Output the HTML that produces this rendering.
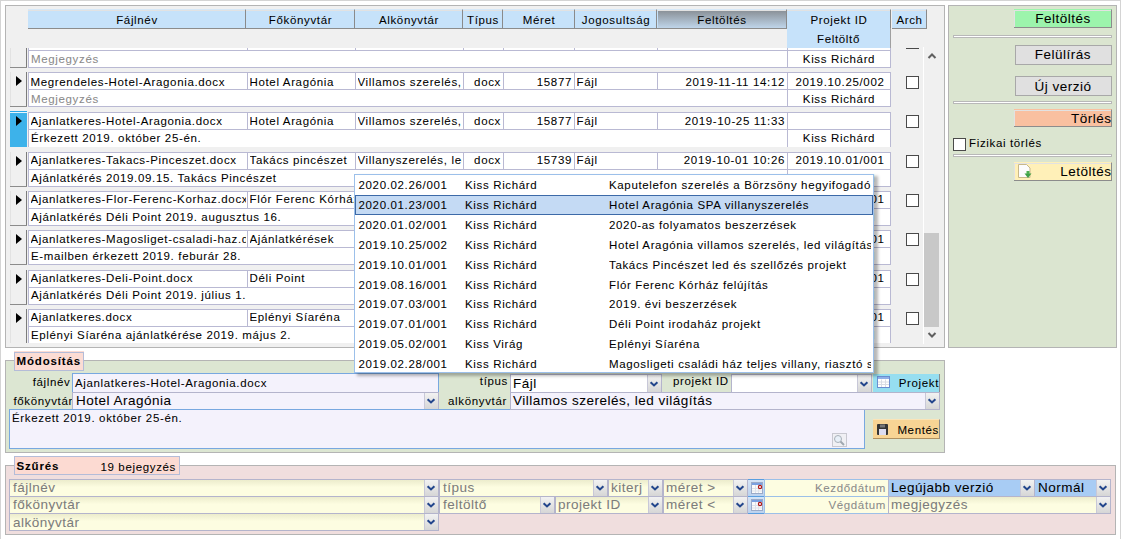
<!DOCTYPE html>
<html><head><meta charset="utf-8"><style>
html,body{margin:0;padding:0;width:1121px;height:539px;overflow:hidden;background:#fff}
body{position:relative;font-family:"Liberation Sans",sans-serif;color:#000}
body div, body svg{position:absolute}
body div div{white-space:nowrap;-webkit-text-stroke:0.05px currentColor}
div{white-space:nowrap;-webkit-text-stroke:0.05px currentColor}
</style></head><body>
<div style="left:0px;top:0px;width:1121px;height:539px;border:1px solid #d4d4d4;border-bottom:0;box-sizing:border-box;background:#fff"></div>
<div style="left:5px;top:5px;width:940px;height:343px;border:1px solid #b4b4b4;box-sizing:border-box;background:#f0f0f0"></div>
<div style="left:28px;top:9px;width:218px;height:20px;background:#c6e2fa;border-top:1px solid #d6e8f8;border-right:1px solid #8a8a8a;border-bottom:1px solid #8c8c8c;box-shadow:inset 0 1px 0 #e2e2e2;box-sizing:border-box"></div>
<div style="left:-163.0px;width:600px;text-align:center;top:13.59px;line-height:12.85px;font-size:11.5px;letter-spacing:0.65px;color:#000;">Fájlnév</div>
<div style="left:246px;top:9px;width:109px;height:20px;background:#c6e2fa;border-top:1px solid #d6e8f8;border-right:1px solid #8a8a8a;border-bottom:1px solid #8c8c8c;box-shadow:inset 0 1px 0 #e2e2e2;box-sizing:border-box"></div>
<div style="left:0.5px;width:600px;text-align:center;top:13.59px;line-height:12.85px;font-size:11.5px;letter-spacing:0.65px;color:#000;">Főkönyvtár</div>
<div style="left:355px;top:9px;width:108px;height:20px;background:#c6e2fa;border-top:1px solid #d6e8f8;border-right:1px solid #8a8a8a;border-bottom:1px solid #8c8c8c;box-shadow:inset 0 1px 0 #e2e2e2;box-sizing:border-box"></div>
<div style="left:109.0px;width:600px;text-align:center;top:13.59px;line-height:12.85px;font-size:11.5px;letter-spacing:0.65px;color:#000;">Alkönyvtár</div>
<div style="left:463px;top:9px;width:40px;height:20px;background:#c6e2fa;border-top:1px solid #d6e8f8;border-right:1px solid #8a8a8a;border-bottom:1px solid #8c8c8c;box-shadow:inset 0 1px 0 #e2e2e2;box-sizing:border-box"></div>
<div style="left:183.0px;width:600px;text-align:center;top:13.59px;line-height:12.85px;font-size:11.5px;letter-spacing:0.65px;color:#000;">Típus</div>
<div style="left:503px;top:9px;width:72px;height:20px;background:#c6e2fa;border-top:1px solid #d6e8f8;border-right:1px solid #8a8a8a;border-bottom:1px solid #8c8c8c;box-shadow:inset 0 1px 0 #e2e2e2;box-sizing:border-box"></div>
<div style="left:239.0px;width:600px;text-align:center;top:13.59px;line-height:12.85px;font-size:11.5px;letter-spacing:0.65px;color:#000;">Méret</div>
<div style="left:575px;top:9px;width:82px;height:20px;background:#c6e2fa;border-top:1px solid #d6e8f8;border-right:1px solid #8a8a8a;border-bottom:1px solid #8c8c8c;box-shadow:inset 0 1px 0 #e2e2e2;box-sizing:border-box"></div>
<div style="left:316.0px;width:600px;text-align:center;top:13.59px;line-height:12.85px;font-size:11.5px;letter-spacing:0.65px;color:#000;">Jogosultság</div>
<div style="left:657px;top:9px;width:130px;height:20px;background:#c6e2fa;border-top:1px solid #d6e8f8;border-right:1px solid #8a8a8a;border-bottom:1px solid #8c8c8c;box-shadow:inset 0 1px 0 #e2e2e2;box-sizing:border-box"></div>
<div style="left:658px;top:11px;width:128px;height:17px;background:linear-gradient(#8b9299,#bfd5ea)"></div>
<div style="left:422.0px;width:600px;text-align:center;top:13.59px;line-height:12.85px;font-size:11.5px;letter-spacing:0.65px;color:#000;">Feltöltés</div>
<div style="left:787px;top:9px;width:104px;height:20px;background:#c6e2fa;border-top:1px solid #d6e8f8;border-right:1px solid #8a8a8a;border-bottom:1px solid #8c8c8c;box-shadow:inset 0 1px 0 #e2e2e2;box-sizing:border-box"></div>
<div style="left:539.0px;width:600px;text-align:center;top:13.59px;line-height:12.85px;font-size:11.5px;letter-spacing:0.65px;color:#000;">Projekt ID</div>
<div style="left:892px;top:9px;width:35px;height:20px;background:#c6e2fa;border-top:1px solid #d6e8f8;border-right:1px solid #8a8a8a;border-bottom:1px solid #8c8c8c;box-shadow:inset 0 1px 0 #e2e2e2;box-sizing:border-box"></div>
<div style="left:609.5px;width:600px;text-align:center;top:13.59px;line-height:12.85px;font-size:11.5px;letter-spacing:0.65px;color:#000;">Arch</div>
<div style="left:787px;top:28px;width:104px;height:21px;background:#c6e2fa;border-right:1px solid #a0a0a0;border-bottom:1px solid #8c8c8c;box-sizing:border-box"></div>
<div style="left:538.5px;width:600px;text-align:center;top:32.59px;line-height:12.85px;font-size:11.5px;letter-spacing:0.65px;color:#000;">Feltöltő</div>
<div style="left:6px;top:48px;width:917px;height:295px;overflow:hidden">
<div style="left:4px;top:-15px;width:1px;height:34px;background:#e2e2e2"></div>
<div style="left:20px;top:-15px;width:1px;height:35px;background:#7c7c7c"></div>
<div style="left:4px;top:19px;width:17px;height:1px;background:#8c8c8c"></div>
<div style="left:22px;top:-15px;width:220px;height:18px;background:#fff;border:1px solid #b9b9d3;box-sizing:border-box"></div>
<div style="left:241px;top:-15px;width:109px;height:18px;background:#fff;border:1px solid #b9b9d3;box-sizing:border-box"></div>
<div style="left:349px;top:-15px;width:109px;height:18px;background:#fff;border:1px solid #b9b9d3;box-sizing:border-box"></div>
<div style="left:457px;top:-15px;width:41px;height:18px;background:#fff;border:1px solid #b9b9d3;box-sizing:border-box"></div>
<div style="left:497px;top:-15px;width:72px;height:18px;background:#fff;border:1px solid #b9b9d3;box-sizing:border-box"></div>
<div style="left:568px;top:-15px;width:84px;height:18px;background:#fff;border:1px solid #b9b9d3;box-sizing:border-box"></div>
<div style="left:651px;top:-15px;width:131px;height:18px;background:#fff;border:1px solid #b9b9d3;box-sizing:border-box"></div>
<div style="left:781px;top:-15px;width:104px;height:18px;background:#fff;border:1px solid #b9b9d3;box-sizing:border-box"></div>
<div style="left:22px;top:2px;width:760px;height:18px;background:#fff;border:1px solid #b9b9d3;box-sizing:border-box"></div>
<div style="left:781px;top:2px;width:104px;height:18px;background:#fff;border:1px solid #b9b9d3;box-sizing:border-box"></div>
<div style="left:25px;top:4.59px;line-height:12.85px;font-size:11.5px;letter-spacing:0.65px;color:#8a8a8a;white-space:nowrap">Megjegyzés</div>
<div style="left:781px;width:104px;text-align:center;top:4.59px;line-height:12.85px;font-size:11.5px;letter-spacing:0.65px;white-space:nowrap">Kiss Richárd</div>
<div style="left:900px;top:-12px;width:13px;height:13px;background:#fff;border:1px solid #4a4a4a;box-sizing:border-box"></div>
<div style="left:4px;top:24px;width:1px;height:34px;background:#e2e2e2"></div>
<div style="left:20px;top:24px;width:1px;height:35px;background:#7c7c7c"></div>
<div style="left:4px;top:58px;width:17px;height:1px;background:#8c8c8c"></div>
<svg style="left:10px;top:28px" width="7" height="11"><path d="M0 0 L0 10 L6 5 Z" fill="#000"/></svg>
<div style="left:22px;top:24px;width:220px;height:18px;background:#fff;border:1px solid #b9b9d3;box-sizing:border-box"></div>
<div style="left:24.5px;top:27.59px;width:215.5px;overflow:hidden;white-space:nowrap;line-height:12.85px;font-size:11.5px;letter-spacing:0.65px">Megrendeles-Hotel-Aragonia.docx</div>
<div style="left:241px;top:24px;width:109px;height:18px;background:#fff;border:1px solid #b9b9d3;box-sizing:border-box"></div>
<div style="left:243.5px;top:27.59px;width:104.5px;overflow:hidden;white-space:nowrap;line-height:12.85px;font-size:11.5px;letter-spacing:0.65px">Hotel Aragónia</div>
<div style="left:349px;top:24px;width:109px;height:18px;background:#fff;border:1px solid #b9b9d3;box-sizing:border-box"></div>
<div style="left:351.5px;top:27.59px;width:104.5px;overflow:hidden;white-space:nowrap;line-height:12.85px;font-size:11.5px;letter-spacing:0.65px">Villamos szerelés, led</div>
<div style="left:457px;top:24px;width:41px;height:18px;background:#fff;border:1px solid #b9b9d3;box-sizing:border-box"></div>
<div style="left:458px;top:27.59px;width:37px;text-align:right;overflow:hidden;white-space:nowrap;line-height:12.85px;font-size:11.5px;letter-spacing:0.65px">docx</div>
<div style="left:497px;top:24px;width:72px;height:18px;background:#fff;border:1px solid #b9b9d3;box-sizing:border-box"></div>
<div style="left:498px;top:27.59px;width:68px;text-align:right;overflow:hidden;white-space:nowrap;line-height:12.85px;font-size:11.5px;letter-spacing:0.65px">15877</div>
<div style="left:568px;top:24px;width:84px;height:18px;background:#fff;border:1px solid #b9b9d3;box-sizing:border-box"></div>
<div style="left:570.5px;top:27.59px;width:79.5px;overflow:hidden;white-space:nowrap;line-height:12.85px;font-size:11.5px;letter-spacing:0.65px">Fájl</div>
<div style="left:651px;top:24px;width:131px;height:18px;background:#fff;border:1px solid #b9b9d3;box-sizing:border-box"></div>
<div style="left:652px;top:27.59px;width:127px;text-align:right;overflow:hidden;white-space:nowrap;line-height:12.85px;font-size:11.5px;letter-spacing:0.65px">2019-11-11 14:12</div>
<div style="left:781px;top:24px;width:104px;height:18px;background:#fff;border:1px solid #b9b9d3;box-sizing:border-box"></div>
<div style="left:783px;top:27.59px;width:102px;text-align:center;overflow:hidden;white-space:nowrap;line-height:12.85px;font-size:11.5px;letter-spacing:0.65px">2019.10.25/002</div>
<div style="left:22px;top:41px;width:760px;height:18px;background:#fff;border:1px solid #b9b9d3;box-sizing:border-box"></div>
<div style="left:781px;top:41px;width:104px;height:18px;background:#fff;border:1px solid #b9b9d3;box-sizing:border-box"></div>
<div style="left:25px;top:44.99px;line-height:12.85px;font-size:11.5px;letter-spacing:0.65px;color:#8a8a8a;white-space:nowrap">Megjegyzés</div>
<div style="left:781px;width:104px;text-align:center;top:44.99px;line-height:12.85px;font-size:11.5px;letter-spacing:0.65px;white-space:nowrap">Kiss Richárd</div>
<div style="left:900px;top:28px;width:13px;height:13px;background:#fff;border:1px solid #4a4a4a;box-sizing:border-box"></div>
<div style="left:4px;top:63px;width:17px;height:36px;background:#3db2ea;border-top:1px solid #2aa8e8;box-sizing:border-box"></div>
<div style="left:4px;top:64px;width:17px;height:1px;background:#e8f6fd"></div>
<svg style="left:10px;top:68px" width="7" height="11"><path d="M0 0 L0 10 L6 5 Z" fill="#000"/></svg>
<div style="left:22px;top:64px;width:220px;height:18px;background:#fff;border:1px solid #b9b9d3;box-sizing:border-box"></div>
<div style="left:24.5px;top:66.87px;width:215.5px;overflow:hidden;white-space:nowrap;line-height:12.85px;font-size:11.5px;letter-spacing:0.65px">Ajanlatkeres-Hotel-Aragonia.docx</div>
<div style="left:241px;top:64px;width:109px;height:18px;background:#fff;border:1px solid #b9b9d3;box-sizing:border-box"></div>
<div style="left:243.5px;top:66.87px;width:104.5px;overflow:hidden;white-space:nowrap;line-height:12.85px;font-size:11.5px;letter-spacing:0.65px">Hotel Aragónia</div>
<div style="left:349px;top:64px;width:109px;height:18px;background:#fff;border:1px solid #b9b9d3;box-sizing:border-box"></div>
<div style="left:351.5px;top:66.87px;width:104.5px;overflow:hidden;white-space:nowrap;line-height:12.85px;font-size:11.5px;letter-spacing:0.65px">Villamos szerelés, led</div>
<div style="left:457px;top:64px;width:41px;height:18px;background:#fff;border:1px solid #b9b9d3;box-sizing:border-box"></div>
<div style="left:458px;top:66.87px;width:37px;text-align:right;overflow:hidden;white-space:nowrap;line-height:12.85px;font-size:11.5px;letter-spacing:0.65px">docx</div>
<div style="left:497px;top:64px;width:72px;height:18px;background:#fff;border:1px solid #b9b9d3;box-sizing:border-box"></div>
<div style="left:498px;top:66.87px;width:68px;text-align:right;overflow:hidden;white-space:nowrap;line-height:12.85px;font-size:11.5px;letter-spacing:0.65px">15877</div>
<div style="left:568px;top:64px;width:84px;height:18px;background:#fff;border:1px solid #b9b9d3;box-sizing:border-box"></div>
<div style="left:570.5px;top:66.87px;width:79.5px;overflow:hidden;white-space:nowrap;line-height:12.85px;font-size:11.5px;letter-spacing:0.65px">Fájl</div>
<div style="left:651px;top:64px;width:131px;height:18px;background:#fff;border:1px solid #b9b9d3;box-sizing:border-box"></div>
<div style="left:652px;top:66.87px;width:127px;text-align:right;overflow:hidden;white-space:nowrap;line-height:12.85px;font-size:11.5px;letter-spacing:0.65px">2019-10-25 11:33</div>
<div style="left:781px;top:64px;width:104px;height:18px;background:#fff;border:1px solid #b9b9d3;box-sizing:border-box"></div>
<div style="left:22px;top:81px;width:760px;height:18px;background:#fff;border:1px solid #b9b9d3;border-bottom:0;box-sizing:border-box"></div>
<div style="left:781px;top:81px;width:104px;height:18px;background:#fff;border:1px solid #b9b9d3;border-bottom:0;box-sizing:border-box"></div>
<div style="left:25px;top:84.27px;line-height:12.85px;font-size:11.5px;letter-spacing:0.65px;white-space:nowrap">Érkezett 2019. október 25-én.</div>
<div style="left:781px;width:104px;text-align:center;top:84.27px;line-height:12.85px;font-size:11.5px;letter-spacing:0.65px;white-space:nowrap">Kiss Richárd</div>
<div style="left:900px;top:67px;width:13px;height:13px;background:#fff;border:1px solid #4a4a4a;box-sizing:border-box"></div>
<div style="left:4px;top:104px;width:1px;height:34px;background:#e2e2e2"></div>
<div style="left:20px;top:104px;width:1px;height:35px;background:#7c7c7c"></div>
<div style="left:4px;top:138px;width:17px;height:1px;background:#8c8c8c"></div>
<svg style="left:10px;top:108px" width="7" height="11"><path d="M0 0 L0 10 L6 5 Z" fill="#000"/></svg>
<div style="left:22px;top:104px;width:220px;height:18px;background:#fff;border:1px solid #b9b9d3;box-sizing:border-box"></div>
<div style="left:24.5px;top:106.15px;width:215.5px;overflow:hidden;white-space:nowrap;line-height:12.85px;font-size:11.5px;letter-spacing:0.65px">Ajanlatkeres-Takacs-Pinceszet.docx</div>
<div style="left:241px;top:104px;width:109px;height:18px;background:#fff;border:1px solid #b9b9d3;box-sizing:border-box"></div>
<div style="left:243.5px;top:106.15px;width:104.5px;overflow:hidden;white-space:nowrap;line-height:12.85px;font-size:11.5px;letter-spacing:0.65px">Takács pincészet</div>
<div style="left:349px;top:104px;width:109px;height:18px;background:#fff;border:1px solid #b9b9d3;box-sizing:border-box"></div>
<div style="left:351.5px;top:106.15px;width:104.5px;overflow:hidden;white-space:nowrap;line-height:12.85px;font-size:11.5px;letter-spacing:0.65px">Villanyszerelés, led</div>
<div style="left:457px;top:104px;width:41px;height:18px;background:#fff;border:1px solid #b9b9d3;box-sizing:border-box"></div>
<div style="left:458px;top:106.15px;width:37px;text-align:right;overflow:hidden;white-space:nowrap;line-height:12.85px;font-size:11.5px;letter-spacing:0.65px">docx</div>
<div style="left:497px;top:104px;width:72px;height:18px;background:#fff;border:1px solid #b9b9d3;box-sizing:border-box"></div>
<div style="left:498px;top:106.15px;width:68px;text-align:right;overflow:hidden;white-space:nowrap;line-height:12.85px;font-size:11.5px;letter-spacing:0.65px">15739</div>
<div style="left:568px;top:104px;width:84px;height:18px;background:#fff;border:1px solid #b9b9d3;box-sizing:border-box"></div>
<div style="left:570.5px;top:106.15px;width:79.5px;overflow:hidden;white-space:nowrap;line-height:12.85px;font-size:11.5px;letter-spacing:0.65px">Fájl</div>
<div style="left:651px;top:104px;width:131px;height:18px;background:#fff;border:1px solid #b9b9d3;box-sizing:border-box"></div>
<div style="left:652px;top:106.15px;width:127px;text-align:right;overflow:hidden;white-space:nowrap;line-height:12.85px;font-size:11.5px;letter-spacing:0.65px">2019-10-01 10:26</div>
<div style="left:781px;top:104px;width:104px;height:18px;background:#fff;border:1px solid #b9b9d3;box-sizing:border-box"></div>
<div style="left:783px;top:106.15px;width:102px;text-align:center;overflow:hidden;white-space:nowrap;line-height:12.85px;font-size:11.5px;letter-spacing:0.65px">2019.10.01/001</div>
<div style="left:22px;top:121px;width:760px;height:18px;background:#fff;border:1px solid #b9b9d3;box-sizing:border-box"></div>
<div style="left:781px;top:121px;width:104px;height:18px;background:#fff;border:1px solid #b9b9d3;box-sizing:border-box"></div>
<div style="left:25px;top:123.55px;line-height:12.85px;font-size:11.5px;letter-spacing:0.65px;white-space:nowrap">Ajánlatkérés 2019.09.15. Takács Pincészet</div>
<div style="left:781px;width:104px;text-align:center;top:123.55px;line-height:12.85px;font-size:11.5px;letter-spacing:0.65px;white-space:nowrap">Kiss Richárd</div>
<div style="left:900px;top:107px;width:13px;height:13px;background:#fff;border:1px solid #4a4a4a;box-sizing:border-box"></div>
<div style="left:4px;top:143px;width:1px;height:34px;background:#e2e2e2"></div>
<div style="left:20px;top:143px;width:1px;height:35px;background:#7c7c7c"></div>
<div style="left:4px;top:177px;width:17px;height:1px;background:#8c8c8c"></div>
<svg style="left:10px;top:147px" width="7" height="11"><path d="M0 0 L0 10 L6 5 Z" fill="#000"/></svg>
<div style="left:22px;top:143px;width:220px;height:18px;background:#fff;border:1px solid #b9b9d3;box-sizing:border-box"></div>
<div style="left:24.5px;top:145.43px;width:215.5px;overflow:hidden;white-space:nowrap;line-height:12.85px;font-size:11.5px;letter-spacing:0.65px">Ajanlatkeres-Flor-Ferenc-Korhaz.docx</div>
<div style="left:241px;top:143px;width:109px;height:18px;background:#fff;border:1px solid #b9b9d3;box-sizing:border-box"></div>
<div style="left:243.5px;top:145.43px;width:104.5px;overflow:hidden;white-space:nowrap;line-height:12.85px;font-size:11.5px;letter-spacing:0.65px">Flór Ferenc Kórház</div>
<div style="left:349px;top:143px;width:109px;height:18px;background:#fff;border:1px solid #b9b9d3;box-sizing:border-box"></div>
<div style="left:351.5px;top:145.43px;width:104.5px;overflow:hidden;white-space:nowrap;line-height:12.85px;font-size:11.5px;letter-spacing:0.65px">Villanyszerelés</div>
<div style="left:457px;top:143px;width:41px;height:18px;background:#fff;border:1px solid #b9b9d3;box-sizing:border-box"></div>
<div style="left:458px;top:145.43px;width:37px;text-align:right;overflow:hidden;white-space:nowrap;line-height:12.85px;font-size:11.5px;letter-spacing:0.65px">docx</div>
<div style="left:497px;top:143px;width:72px;height:18px;background:#fff;border:1px solid #b9b9d3;box-sizing:border-box"></div>
<div style="left:498px;top:145.43px;width:68px;text-align:right;overflow:hidden;white-space:nowrap;line-height:12.85px;font-size:11.5px;letter-spacing:0.65px">15739</div>
<div style="left:568px;top:143px;width:84px;height:18px;background:#fff;border:1px solid #b9b9d3;box-sizing:border-box"></div>
<div style="left:570.5px;top:145.43px;width:79.5px;overflow:hidden;white-space:nowrap;line-height:12.85px;font-size:11.5px;letter-spacing:0.65px">Fájl</div>
<div style="left:651px;top:143px;width:131px;height:18px;background:#fff;border:1px solid #b9b9d3;box-sizing:border-box"></div>
<div style="left:652px;top:145.43px;width:127px;text-align:right;overflow:hidden;white-space:nowrap;line-height:12.85px;font-size:11.5px;letter-spacing:0.65px">2019-10-01 10:26</div>
<div style="left:781px;top:143px;width:104px;height:18px;background:#fff;border:1px solid #b9b9d3;box-sizing:border-box"></div>
<div style="left:783px;top:145.43px;width:102px;text-align:center;overflow:hidden;white-space:nowrap;line-height:12.85px;font-size:11.5px;letter-spacing:0.65px">2019.08.16/001</div>
<div style="left:22px;top:160px;width:760px;height:18px;background:#fff;border:1px solid #b9b9d3;box-sizing:border-box"></div>
<div style="left:781px;top:160px;width:104px;height:18px;background:#fff;border:1px solid #b9b9d3;box-sizing:border-box"></div>
<div style="left:25px;top:162.83px;line-height:12.85px;font-size:11.5px;letter-spacing:0.65px;white-space:nowrap">Ajánlatkérés Déli Point 2019. augusztus 16.</div>
<div style="left:781px;width:104px;text-align:center;top:162.83px;line-height:12.85px;font-size:11.5px;letter-spacing:0.65px;white-space:nowrap">Kiss Richárd</div>
<div style="left:900px;top:146px;width:13px;height:13px;background:#fff;border:1px solid #4a4a4a;box-sizing:border-box"></div>
<div style="left:4px;top:182px;width:1px;height:34px;background:#e2e2e2"></div>
<div style="left:20px;top:182px;width:1px;height:35px;background:#7c7c7c"></div>
<div style="left:4px;top:216px;width:17px;height:1px;background:#8c8c8c"></div>
<svg style="left:10px;top:186px" width="7" height="11"><path d="M0 0 L0 10 L6 5 Z" fill="#000"/></svg>
<div style="left:22px;top:182px;width:220px;height:18px;background:#fff;border:1px solid #b9b9d3;box-sizing:border-box"></div>
<div style="left:24.5px;top:184.71px;width:215.5px;overflow:hidden;white-space:nowrap;line-height:12.85px;font-size:11.5px;letter-spacing:0.65px">Ajanlatkeres-Magosliget-csaladi-haz.docx</div>
<div style="left:241px;top:182px;width:109px;height:18px;background:#fff;border:1px solid #b9b9d3;box-sizing:border-box"></div>
<div style="left:243.5px;top:184.71px;width:104.5px;overflow:hidden;white-space:nowrap;line-height:12.85px;font-size:11.5px;letter-spacing:0.65px">Ajánlatkérések</div>
<div style="left:349px;top:182px;width:109px;height:18px;background:#fff;border:1px solid #b9b9d3;box-sizing:border-box"></div>
<div style="left:351.5px;top:184.71px;width:104.5px;overflow:hidden;white-space:nowrap;line-height:12.85px;font-size:11.5px;letter-spacing:0.65px">Villanyszerelés</div>
<div style="left:457px;top:182px;width:41px;height:18px;background:#fff;border:1px solid #b9b9d3;box-sizing:border-box"></div>
<div style="left:458px;top:184.71px;width:37px;text-align:right;overflow:hidden;white-space:nowrap;line-height:12.85px;font-size:11.5px;letter-spacing:0.65px">docx</div>
<div style="left:497px;top:182px;width:72px;height:18px;background:#fff;border:1px solid #b9b9d3;box-sizing:border-box"></div>
<div style="left:498px;top:184.71px;width:68px;text-align:right;overflow:hidden;white-space:nowrap;line-height:12.85px;font-size:11.5px;letter-spacing:0.65px">15739</div>
<div style="left:568px;top:182px;width:84px;height:18px;background:#fff;border:1px solid #b9b9d3;box-sizing:border-box"></div>
<div style="left:570.5px;top:184.71px;width:79.5px;overflow:hidden;white-space:nowrap;line-height:12.85px;font-size:11.5px;letter-spacing:0.65px">Fájl</div>
<div style="left:651px;top:182px;width:131px;height:18px;background:#fff;border:1px solid #b9b9d3;box-sizing:border-box"></div>
<div style="left:652px;top:184.71px;width:127px;text-align:right;overflow:hidden;white-space:nowrap;line-height:12.85px;font-size:11.5px;letter-spacing:0.65px">2019-10-01 10:26</div>
<div style="left:781px;top:182px;width:104px;height:18px;background:#fff;border:1px solid #b9b9d3;box-sizing:border-box"></div>
<div style="left:783px;top:184.71px;width:102px;text-align:center;overflow:hidden;white-space:nowrap;line-height:12.85px;font-size:11.5px;letter-spacing:0.65px">2019.02.28/001</div>
<div style="left:22px;top:199px;width:760px;height:18px;background:#fff;border:1px solid #b9b9d3;box-sizing:border-box"></div>
<div style="left:781px;top:199px;width:104px;height:18px;background:#fff;border:1px solid #b9b9d3;box-sizing:border-box"></div>
<div style="left:25px;top:202.11px;line-height:12.85px;font-size:11.5px;letter-spacing:0.65px;white-space:nowrap">E-mailben érkezett 2019. feburár 28.</div>
<div style="left:781px;width:104px;text-align:center;top:202.11px;line-height:12.85px;font-size:11.5px;letter-spacing:0.65px;white-space:nowrap">Kiss Richárd</div>
<div style="left:900px;top:185px;width:13px;height:13px;background:#fff;border:1px solid #4a4a4a;box-sizing:border-box"></div>
<div style="left:4px;top:222px;width:1px;height:34px;background:#e2e2e2"></div>
<div style="left:20px;top:222px;width:1px;height:35px;background:#7c7c7c"></div>
<div style="left:4px;top:256px;width:17px;height:1px;background:#8c8c8c"></div>
<svg style="left:10px;top:226px" width="7" height="11"><path d="M0 0 L0 10 L6 5 Z" fill="#000"/></svg>
<div style="left:22px;top:222px;width:220px;height:18px;background:#fff;border:1px solid #b9b9d3;box-sizing:border-box"></div>
<div style="left:24.5px;top:223.99px;width:215.5px;overflow:hidden;white-space:nowrap;line-height:12.85px;font-size:11.5px;letter-spacing:0.65px">Ajanlatkeres-Deli-Point.docx</div>
<div style="left:241px;top:222px;width:109px;height:18px;background:#fff;border:1px solid #b9b9d3;box-sizing:border-box"></div>
<div style="left:243.5px;top:223.99px;width:104.5px;overflow:hidden;white-space:nowrap;line-height:12.85px;font-size:11.5px;letter-spacing:0.65px">Déli Point</div>
<div style="left:349px;top:222px;width:109px;height:18px;background:#fff;border:1px solid #b9b9d3;box-sizing:border-box"></div>
<div style="left:351.5px;top:223.99px;width:104.5px;overflow:hidden;white-space:nowrap;line-height:12.85px;font-size:11.5px;letter-spacing:0.65px">Villanyszerelés</div>
<div style="left:457px;top:222px;width:41px;height:18px;background:#fff;border:1px solid #b9b9d3;box-sizing:border-box"></div>
<div style="left:458px;top:223.99px;width:37px;text-align:right;overflow:hidden;white-space:nowrap;line-height:12.85px;font-size:11.5px;letter-spacing:0.65px">docx</div>
<div style="left:497px;top:222px;width:72px;height:18px;background:#fff;border:1px solid #b9b9d3;box-sizing:border-box"></div>
<div style="left:498px;top:223.99px;width:68px;text-align:right;overflow:hidden;white-space:nowrap;line-height:12.85px;font-size:11.5px;letter-spacing:0.65px">15739</div>
<div style="left:568px;top:222px;width:84px;height:18px;background:#fff;border:1px solid #b9b9d3;box-sizing:border-box"></div>
<div style="left:570.5px;top:223.99px;width:79.5px;overflow:hidden;white-space:nowrap;line-height:12.85px;font-size:11.5px;letter-spacing:0.65px">Fájl</div>
<div style="left:651px;top:222px;width:131px;height:18px;background:#fff;border:1px solid #b9b9d3;box-sizing:border-box"></div>
<div style="left:652px;top:223.99px;width:127px;text-align:right;overflow:hidden;white-space:nowrap;line-height:12.85px;font-size:11.5px;letter-spacing:0.65px">2019-10-01 10:26</div>
<div style="left:781px;top:222px;width:104px;height:18px;background:#fff;border:1px solid #b9b9d3;box-sizing:border-box"></div>
<div style="left:783px;top:223.99px;width:102px;text-align:center;overflow:hidden;white-space:nowrap;line-height:12.85px;font-size:11.5px;letter-spacing:0.65px">2019.07.01/001</div>
<div style="left:22px;top:239px;width:760px;height:18px;background:#fff;border:1px solid #b9b9d3;box-sizing:border-box"></div>
<div style="left:781px;top:239px;width:104px;height:18px;background:#fff;border:1px solid #b9b9d3;box-sizing:border-box"></div>
<div style="left:25px;top:241.39px;line-height:12.85px;font-size:11.5px;letter-spacing:0.65px;white-space:nowrap">Ajánlatkérés Déli Point 2019. július 1.</div>
<div style="left:781px;width:104px;text-align:center;top:241.39px;line-height:12.85px;font-size:11.5px;letter-spacing:0.65px;white-space:nowrap">Kiss Richárd</div>
<div style="left:900px;top:225px;width:13px;height:13px;background:#fff;border:1px solid #4a4a4a;box-sizing:border-box"></div>
<div style="left:4px;top:261px;width:1px;height:34px;background:#e2e2e2"></div>
<div style="left:20px;top:261px;width:1px;height:35px;background:#7c7c7c"></div>
<div style="left:4px;top:295px;width:17px;height:1px;background:#8c8c8c"></div>
<svg style="left:10px;top:265px" width="7" height="11"><path d="M0 0 L0 10 L6 5 Z" fill="#000"/></svg>
<div style="left:22px;top:261px;width:220px;height:18px;background:#fff;border:1px solid #b9b9d3;box-sizing:border-box"></div>
<div style="left:24.5px;top:263.27px;width:215.5px;overflow:hidden;white-space:nowrap;line-height:12.85px;font-size:11.5px;letter-spacing:0.65px">Ajanlatkeres.docx</div>
<div style="left:241px;top:261px;width:109px;height:18px;background:#fff;border:1px solid #b9b9d3;box-sizing:border-box"></div>
<div style="left:243.5px;top:263.27px;width:104.5px;overflow:hidden;white-space:nowrap;line-height:12.85px;font-size:11.5px;letter-spacing:0.65px">Eplényi Síaréna</div>
<div style="left:349px;top:261px;width:109px;height:18px;background:#fff;border:1px solid #b9b9d3;box-sizing:border-box"></div>
<div style="left:351.5px;top:263.27px;width:104.5px;overflow:hidden;white-space:nowrap;line-height:12.85px;font-size:11.5px;letter-spacing:0.65px">Villanyszerelés</div>
<div style="left:457px;top:261px;width:41px;height:18px;background:#fff;border:1px solid #b9b9d3;box-sizing:border-box"></div>
<div style="left:458px;top:263.27px;width:37px;text-align:right;overflow:hidden;white-space:nowrap;line-height:12.85px;font-size:11.5px;letter-spacing:0.65px">docx</div>
<div style="left:497px;top:261px;width:72px;height:18px;background:#fff;border:1px solid #b9b9d3;box-sizing:border-box"></div>
<div style="left:498px;top:263.27px;width:68px;text-align:right;overflow:hidden;white-space:nowrap;line-height:12.85px;font-size:11.5px;letter-spacing:0.65px">15739</div>
<div style="left:568px;top:261px;width:84px;height:18px;background:#fff;border:1px solid #b9b9d3;box-sizing:border-box"></div>
<div style="left:570.5px;top:263.27px;width:79.5px;overflow:hidden;white-space:nowrap;line-height:12.85px;font-size:11.5px;letter-spacing:0.65px">Fájl</div>
<div style="left:651px;top:261px;width:131px;height:18px;background:#fff;border:1px solid #b9b9d3;box-sizing:border-box"></div>
<div style="left:652px;top:263.27px;width:127px;text-align:right;overflow:hidden;white-space:nowrap;line-height:12.85px;font-size:11.5px;letter-spacing:0.65px">2019-10-01 10:26</div>
<div style="left:781px;top:261px;width:104px;height:18px;background:#fff;border:1px solid #b9b9d3;box-sizing:border-box"></div>
<div style="left:783px;top:263.27px;width:102px;text-align:center;overflow:hidden;white-space:nowrap;line-height:12.85px;font-size:11.5px;letter-spacing:0.65px">2019.05.02/001</div>
<div style="left:22px;top:278px;width:760px;height:18px;background:#fff;border:1px solid #b9b9d3;box-sizing:border-box"></div>
<div style="left:781px;top:278px;width:104px;height:18px;background:#fff;border:1px solid #b9b9d3;box-sizing:border-box"></div>
<div style="left:25px;top:280.67px;line-height:12.85px;font-size:11.5px;letter-spacing:0.65px;white-space:nowrap">Eplényi Síaréna ajánlatkérése 2019. május 2.</div>
<div style="left:781px;width:104px;text-align:center;top:280.67px;line-height:12.85px;font-size:11.5px;letter-spacing:0.65px;white-space:nowrap">Kiss Richárd</div>
<div style="left:900px;top:264px;width:13px;height:13px;background:#fff;border:1px solid #4a4a4a;box-sizing:border-box"></div>
</div>
<div style="left:923px;top:47px;width:1px;height:297px;background:#ffffff"></div>
<div style="left:924px;top:233px;width:15px;height:94px;background:#c8c8c8"></div>
<svg style="left:927px;top:52px" width="10" height="8"><path d="M1.5 6 L5 2.5 L8.5 6" fill="none" stroke="#606060" stroke-width="2"/></svg>
<svg style="left:927px;top:331px" width="10" height="8"><path d="M1.5 2 L5 5.5 L8.5 2" fill="none" stroke="#606060" stroke-width="2"/></svg>
<div style="left:948px;top:5px;width:169px;height:343px;border:1px solid #b4b4b4;box-sizing:border-box;background:#dbe5d0"></div>
<div style="left:1014px;top:9px;width:98px;height:19px;background:#9cf4ac;border-top:1px solid #9cf4ac;border-right:1px solid #8c8c8c;border-bottom:1px solid #8c8c8c;box-shadow:inset 1px 1px 0 #e2e2e2;box-sizing:border-box"></div>
<div style="left:763px;width:600px;text-align:center;top:11.28px;line-height:15.08px;font-size:13.5px;letter-spacing:0.5px;color:#000;">Feltöltés</div>
<div style="left:953px;top:35px;width:159px;height:3px;background:#fff;border:1px solid #b8b8b8;box-sizing:border-box"></div>
<div style="left:1015px;top:45px;width:97px;height:20px;background:#e0e0e0;border:1px solid #a8a8a8;box-sizing:border-box"></div>
<div style="left:763px;width:600px;text-align:center;top:47.28px;line-height:15.08px;font-size:13.5px;letter-spacing:0.5px;color:#000;">Felülírás</div>
<div style="left:1015px;top:76px;width:97px;height:20px;background:#e0e0e0;border:1px solid #a8a8a8;box-sizing:border-box"></div>
<div style="left:763px;width:600px;text-align:center;top:78.78px;line-height:15.08px;font-size:13.5px;letter-spacing:0.5px;color:#000;">Új verzió</div>
<div style="left:953px;top:101px;width:159px;height:3px;background:#fff;border:1px solid #b8b8b8;box-sizing:border-box"></div>
<div style="left:1014px;top:109px;width:98px;height:18px;background:#f9c0a0;border-top:1px solid #f9c0a0;border-right:1px solid #8c8c8c;border-bottom:1px solid #8c8c8c;box-shadow:inset 1px 1px 0 #e2e2e2;box-sizing:border-box"></div>
<div style="right:9.5px;top:111.28px;line-height:15.08px;font-size:13.5px;letter-spacing:0.5px;color:#000;">Törlés</div>
<div style="left:953px;top:138px;width:13px;height:13px;background:#fff;border:1px solid #4a4a4a;box-sizing:border-box"></div>
<div style="left:969px;top:137.09px;line-height:12.85px;font-size:11.5px;letter-spacing:0.65px;color:#000;">Fizikai törlés</div>
<div style="left:953px;top:154px;width:159px;height:3px;background:#fff;border:1px solid #b8b8b8;box-sizing:border-box"></div>
<div style="left:1014px;top:162px;width:98px;height:19px;background:#fff0b8;border-top:1px solid #fff0b8;border-right:1px solid #8c8c8c;border-bottom:1px solid #8c8c8c;box-shadow:inset 1px 1px 0 #e2e2e2;box-sizing:border-box"></div>
<div style="right:9.5px;top:164.28px;line-height:15.08px;font-size:13.5px;letter-spacing:0.5px;color:#000;">Letöltés</div>
<svg style="left:1018px;top:164px" width="16" height="15"><path d="M0.5 0.5 H8.5 L12 4 V13.5 H0.5 Z" fill="#fcfcfc" stroke="#c8b88a"/><path d="M6.5 9.5 H13.5 L10 14 Z" fill="#3f9f46"/><rect x="8.5" y="7" width="3" height="3" fill="#4caf50"/></svg>
<div style="left:5px;top:360px;width:940px;height:93px;border:1px solid #b4b4b4;box-sizing:border-box;background:#dce6d2"></div>
<div style="left:14px;top:351px;width:70px;height:1px;background:#fcdcd4"></div>
<div style="left:14px;top:352px;width:70px;height:19px;background:#fcdcd4;border:1px solid #b4bcd8;box-sizing:border-box"></div>
<div style="left:16.5px;top:354.59px;line-height:12.85px;font-size:11.5px;letter-spacing:0.85px;color:#000;font-weight:bold">Módosítás</div>
<div style="right:1050.5px;top:375.59px;line-height:12.85px;font-size:11.5px;letter-spacing:0.65px;color:#000;">fájlnév</div>
<div style="left:72px;top:373px;width:367px;height:20px;background:#f4f2fc;border:1px solid #78a8e0;box-sizing:border-box"></div>
<div style="left:75px;top:376.59px;line-height:12.85px;font-size:11.5px;letter-spacing:0.65px;color:#000;">Ajanlatkeres-Hotel-Aragonia.docx</div>
<div style="right:1048px;top:395.09px;line-height:12.85px;font-size:11.5px;letter-spacing:0.65px;color:#000;">főkönyvtár</div>
<div style="left:72px;top:392px;width:367px;height:18px;background:#f4f2fc;border:1px solid #b4b4cc;box-sizing:border-box"></div>
<div style="left:424px;top:393px;width:14px;height:16px;background:linear-gradient(#f2f2f2,#d6d6d6);border-left:1px solid #c8c8d8;box-sizing:border-box"></div>
<svg style="left:426px;top:398.0px" width="10" height="6"><path d="M1.6 1.2 L5 4.4 L8.4 1.2" fill="none" stroke="#23468c" stroke-width="2.1"/></svg>
<div style="left:76px;top:393.28px;line-height:15.08px;font-size:13.5px;letter-spacing:0.5px;color:#000;">Hotel Aragónia</div>
<div style="left:9px;top:409px;width:856px;height:40px;background:#f4f2fc;border:1px solid #78a8e0;box-sizing:border-box"></div>
<div style="left:12px;top:411.59px;line-height:12.85px;font-size:11.5px;letter-spacing:0.65px;color:#000;">Érkezett 2019. október 25-én.</div>
<svg style="left:832px;top:433px" width="16" height="15"><rect x="0.5" y="0.5" width="14" height="13" fill="#f0f0f4" stroke="#c8c8d0"/><circle cx="6" cy="6" r="3.5" fill="#e8f0f8" stroke="#a8b0b8"/><path d="M8.5 8.5 L12 12" stroke="#a0a8b0" stroke-width="2"/></svg>
<div style="left:438px;top:373px;width:73px;height:37px;border-bottom:1px solid #78a8e0;box-sizing:border-box"></div>
<div style="right:613px;top:375.09px;line-height:12.85px;font-size:11.5px;letter-spacing:0.65px;color:#000;">típus</div>
<div style="right:614px;top:395.09px;line-height:12.85px;font-size:11.5px;letter-spacing:0.65px;color:#000;">alkönyvtár</div>
<div style="left:510px;top:374px;width:152px;height:19px;background:#ffffff;border:1px solid #b4b4cc;box-sizing:border-box"></div>
<div style="left:647px;top:375px;width:14px;height:17px;background:linear-gradient(#f2f2f2,#d6d6d6);border-left:1px solid #c8c8d8;box-sizing:border-box"></div>
<svg style="left:649px;top:380.5px" width="10" height="6"><path d="M1.6 1.2 L5 4.4 L8.4 1.2" fill="none" stroke="#23468c" stroke-width="2.1"/></svg>
<div style="left:513px;top:375.78px;line-height:15.08px;font-size:13.5px;letter-spacing:0.5px;color:#000;">Fájl</div>
<div style="left:510px;top:392px;width:430px;height:18px;background:#f4f2fc;border:1px solid #b4b4cc;box-sizing:border-box"></div>
<div style="left:925px;top:393px;width:14px;height:16px;background:linear-gradient(#f2f2f2,#d6d6d6);border-left:1px solid #c8c8d8;box-sizing:border-box"></div>
<svg style="left:927px;top:398.0px" width="10" height="6"><path d="M1.6 1.2 L5 4.4 L8.4 1.2" fill="none" stroke="#23468c" stroke-width="2.1"/></svg>
<div style="left:513px;top:393.28px;line-height:15.08px;font-size:13.5px;letter-spacing:0.5px;color:#000;">Villamos szerelés, led világítás</div>
<div style="left:673px;top:375.09px;line-height:12.85px;font-size:11.5px;letter-spacing:0.65px;color:#000;">projekt ID</div>
<div style="left:731px;top:374px;width:141px;height:19px;background:#ffffff;border:1px solid #b4b4cc;box-sizing:border-box"></div>
<div style="left:857px;top:375px;width:14px;height:17px;background:linear-gradient(#f2f2f2,#d6d6d6);border-left:1px solid #c8c8d8;box-sizing:border-box"></div>
<svg style="left:859px;top:380.5px" width="10" height="6"><path d="M1.6 1.2 L5 4.4 L8.4 1.2" fill="none" stroke="#23468c" stroke-width="2.1"/></svg>
<div style="left:873px;top:374px;width:67px;height:18px;background:#96def0;border-right:1px solid #8c8c8c;box-sizing:border-box"></div>
<svg style="left:877px;top:376px" width="13" height="12"><rect x="0.5" y="0.5" width="12" height="11" fill="#fff" stroke="#6a8ed0"/><rect x="1" y="1" width="11" height="2" fill="#8fb0e8"/><path d="M4.5 3.5 V11 M8.5 3.5 V11 M1 6 H12 M1 8.5 H12" stroke="#d8dce4"/></svg>
<div style="right:182px;top:377.09px;line-height:12.85px;font-size:11.5px;letter-spacing:0.65px;color:#000;">Projekt</div>
<div style="left:873px;top:419px;width:67px;height:20px;background:#f8d494;border-top:1px solid #fbe4b8;border-right:1px solid #8c8c8c;border-bottom:1px solid #b09060;box-sizing:border-box"></div>
<svg style="left:877px;top:424px" width="11" height="11"><rect x="0" y="0" width="11" height="11" rx="1" fill="#353535"/><rect x="3" y="0.5" width="5" height="3" fill="#777"/><rect x="2" y="5" width="7" height="6" fill="#dcdcf0"/></svg>
<div style="right:182px;top:423.59px;line-height:12.85px;font-size:11.5px;letter-spacing:0.65px;color:#000;">Mentés</div>
<div style="left:5px;top:465px;width:1111px;height:70px;border:1px solid #b4b4b4;box-sizing:border-box;background:#f0dede"></div>
<div style="left:14px;top:456px;width:166px;height:19px;background:#fcdad2;border:1px solid #b4bcd8;box-sizing:border-box"></div>
<div style="left:16.5px;top:459.59px;line-height:12.85px;font-size:11.5px;letter-spacing:0.85px;color:#000;font-weight:bold">Szűrés</div>
<div style="right:945px;top:460.59px;line-height:12.85px;font-size:11.5px;letter-spacing:0.65px;color:#000;">19 bejegyzés</div>
<div style="left:9px;top:479px;width:430px;height:18px;background:linear-gradient(#ececcc,#fdfde1 45%);border:1px solid #b4b4cc;box-sizing:border-box"></div>
<div style="left:424px;top:480px;width:14px;height:16px;background:linear-gradient(#f2f2f2,#d6d6d6);border-left:1px solid #c8c8d8;box-sizing:border-box"></div>
<svg style="left:426px;top:485.0px" width="10" height="6"><path d="M1.6 1.2 L5 4.4 L8.4 1.2" fill="none" stroke="#23468c" stroke-width="2.1"/></svg>
<div style="left:13px;top:480.28px;line-height:15.08px;font-size:13.5px;letter-spacing:0.5px;color:#7c7c7c;">fájlnév</div>
<div style="left:9px;top:496px;width:430px;height:18px;background:linear-gradient(#ececcc,#fdfde1 45%);border:1px solid #b4b4cc;box-sizing:border-box"></div>
<div style="left:424px;top:497px;width:14px;height:16px;background:linear-gradient(#f2f2f2,#d6d6d6);border-left:1px solid #c8c8d8;box-sizing:border-box"></div>
<svg style="left:426px;top:502.0px" width="10" height="6"><path d="M1.6 1.2 L5 4.4 L8.4 1.2" fill="none" stroke="#23468c" stroke-width="2.1"/></svg>
<div style="left:13px;top:497.28px;line-height:15.08px;font-size:13.5px;letter-spacing:0.5px;color:#7c7c7c;">főkönyvtár</div>
<div style="left:9px;top:513px;width:430px;height:18px;background:linear-gradient(#ececcc,#fdfde1 45%);border:1px solid #b4b4cc;box-sizing:border-box"></div>
<div style="left:424px;top:514px;width:14px;height:16px;background:linear-gradient(#f2f2f2,#d6d6d6);border-left:1px solid #c8c8d8;box-sizing:border-box"></div>
<svg style="left:426px;top:519.0px" width="10" height="6"><path d="M1.6 1.2 L5 4.4 L8.4 1.2" fill="none" stroke="#23468c" stroke-width="2.1"/></svg>
<div style="left:13px;top:514.78px;line-height:15.08px;font-size:13.5px;letter-spacing:0.5px;color:#7c7c7c;">alkönyvtár</div>
<div style="left:439px;top:479px;width:169px;height:18px;background:linear-gradient(#ececcc,#fdfde1 45%);border:1px solid #b4b4cc;box-sizing:border-box"></div>
<div style="left:593px;top:480px;width:14px;height:16px;background:linear-gradient(#f2f2f2,#d6d6d6);border-left:1px solid #c8c8d8;box-sizing:border-box"></div>
<svg style="left:595px;top:485.0px" width="10" height="6"><path d="M1.6 1.2 L5 4.4 L8.4 1.2" fill="none" stroke="#23468c" stroke-width="2.1"/></svg>
<div style="left:443px;top:480.28px;line-height:15.08px;font-size:13.5px;letter-spacing:0.5px;color:#7c7c7c;">típus</div>
<div style="left:608px;top:479px;width:55px;height:18px;background:linear-gradient(#ececcc,#fdfde1 45%);border:1px solid #b4b4cc;box-sizing:border-box"></div>
<div style="left:648px;top:480px;width:14px;height:16px;background:linear-gradient(#f2f2f2,#d6d6d6);border-left:1px solid #c8c8d8;box-sizing:border-box"></div>
<svg style="left:650px;top:485.0px" width="10" height="6"><path d="M1.6 1.2 L5 4.4 L8.4 1.2" fill="none" stroke="#23468c" stroke-width="2.1"/></svg>
<div style="left:611px;top:480.28px;line-height:15.08px;font-size:13.5px;letter-spacing:0.5px;color:#7c7c7c;">kiterj</div>
<div style="left:663px;top:479px;width:85px;height:18px;background:linear-gradient(#ececcc,#fdfde1 45%);border:1px solid #b4b4cc;box-sizing:border-box"></div>
<div style="left:733px;top:480px;width:14px;height:16px;background:linear-gradient(#f2f2f2,#d6d6d6);border-left:1px solid #c8c8d8;box-sizing:border-box"></div>
<svg style="left:735px;top:485.0px" width="10" height="6"><path d="M1.6 1.2 L5 4.4 L8.4 1.2" fill="none" stroke="#23468c" stroke-width="2.1"/></svg>
<div style="left:666px;top:480.28px;line-height:15.08px;font-size:13.5px;letter-spacing:0.5px;color:#7c7c7c;">méret ></div>
<div style="left:439px;top:496px;width:116px;height:18px;background:linear-gradient(#ececcc,#fdfde1 45%);border:1px solid #b4b4cc;box-sizing:border-box"></div>
<div style="left:540px;top:497px;width:14px;height:16px;background:linear-gradient(#f2f2f2,#d6d6d6);border-left:1px solid #c8c8d8;box-sizing:border-box"></div>
<svg style="left:542px;top:502.0px" width="10" height="6"><path d="M1.6 1.2 L5 4.4 L8.4 1.2" fill="none" stroke="#23468c" stroke-width="2.1"/></svg>
<div style="left:443px;top:497.28px;line-height:15.08px;font-size:13.5px;letter-spacing:0.5px;color:#7c7c7c;">feltöltő</div>
<div style="left:555px;top:496px;width:108px;height:18px;background:linear-gradient(#ececcc,#fdfde1 45%);border:1px solid #b4b4cc;box-sizing:border-box"></div>
<div style="left:648px;top:497px;width:14px;height:16px;background:linear-gradient(#f2f2f2,#d6d6d6);border-left:1px solid #c8c8d8;box-sizing:border-box"></div>
<svg style="left:650px;top:502.0px" width="10" height="6"><path d="M1.6 1.2 L5 4.4 L8.4 1.2" fill="none" stroke="#23468c" stroke-width="2.1"/></svg>
<div style="left:558px;top:497.28px;line-height:15.08px;font-size:13.5px;letter-spacing:0.5px;color:#7c7c7c;">projekt ID</div>
<div style="left:663px;top:496px;width:85px;height:18px;background:linear-gradient(#ececcc,#fdfde1 45%);border:1px solid #b4b4cc;box-sizing:border-box"></div>
<div style="left:733px;top:497px;width:14px;height:16px;background:linear-gradient(#f2f2f2,#d6d6d6);border-left:1px solid #c8c8d8;box-sizing:border-box"></div>
<svg style="left:735px;top:502.0px" width="10" height="6"><path d="M1.6 1.2 L5 4.4 L8.4 1.2" fill="none" stroke="#23468c" stroke-width="2.1"/></svg>
<div style="left:666px;top:497.28px;line-height:15.08px;font-size:13.5px;letter-spacing:0.5px;color:#7c7c7c;">méret <</div>
<div style="left:748px;top:479px;width:16px;height:18px;background:linear-gradient(#d4e4f6,#bcd2ee);border-bottom:1px solid #5a9ee0;border-top:1px solid #5a9ee0;box-sizing:border-box"></div>
<svg style="left:751px;top:482px" width="12" height="12"><rect x="0.5" y="0.5" width="11" height="11" fill="#fafafa" stroke="#9aaac8"/><rect x="1" y="1" width="10" height="2" fill="#7aa0e0"/><path d="M4.5 3 V11 M7.5 3 V11 M1 6.5 H11 M1 9 H11" stroke="#dde2ea"/><circle cx="9" cy="5" r="1.6" fill="none" stroke="#b01818" stroke-width="1.2"/></svg>
<div style="left:748px;top:496px;width:16px;height:18px;background:linear-gradient(#d4e4f6,#bcd2ee);border-bottom:1px solid #5a9ee0;border-top:1px solid #5a9ee0;box-sizing:border-box"></div>
<svg style="left:751px;top:499px" width="12" height="12"><rect x="0.5" y="0.5" width="11" height="11" fill="#fafafa" stroke="#9aaac8"/><rect x="1" y="1" width="10" height="2" fill="#7aa0e0"/><path d="M4.5 3 V11 M7.5 3 V11 M1 6.5 H11 M1 9 H11" stroke="#dde2ea"/><circle cx="9" cy="5" r="1.6" fill="none" stroke="#b01818" stroke-width="1.2"/></svg>
<div style="left:764px;top:479px;width:125px;height:18px;background:#fdfde1;border:1px solid #9cc0e8;box-sizing:border-box"></div>
<div style="right:235px;top:481.59px;line-height:12.85px;font-size:11.5px;letter-spacing:0.65px;color:#8a8a8a;">Kezdődátum</div>
<div style="left:764px;top:496px;width:125px;height:18px;background:#fdfde1;border:1px solid #9cc0e8;box-sizing:border-box"></div>
<div style="right:235px;top:499.09px;line-height:12.85px;font-size:11.5px;letter-spacing:0.65px;color:#8a8a8a;">Végdátum</div>
<div style="left:888px;top:479px;width:147px;height:18px;background:#a8ccf4;border:1px solid #b4b4cc;box-sizing:border-box"></div>
<div style="left:1020px;top:480px;width:14px;height:16px;background:linear-gradient(#f2f2f2,#d6d6d6);border-left:1px solid #c8c8d8;box-sizing:border-box"></div>
<svg style="left:1022px;top:485.0px" width="10" height="6"><path d="M1.6 1.2 L5 4.4 L8.4 1.2" fill="none" stroke="#23468c" stroke-width="2.1"/></svg>
<div style="left:891px;top:479.78px;line-height:15.08px;font-size:13.5px;letter-spacing:0.5px;color:#000;">Legújabb verzió</div>
<div style="left:1034px;top:479px;width:77px;height:18px;background:#a8ccf4;border:1px solid #b4b4cc;box-sizing:border-box"></div>
<div style="left:1096px;top:480px;width:14px;height:16px;background:linear-gradient(#f2f2f2,#d6d6d6);border-left:1px solid #c8c8d8;box-sizing:border-box"></div>
<svg style="left:1098px;top:485.0px" width="10" height="6"><path d="M1.6 1.2 L5 4.4 L8.4 1.2" fill="none" stroke="#23468c" stroke-width="2.1"/></svg>
<div style="left:1038px;top:480.28px;line-height:15.08px;font-size:13.5px;letter-spacing:0.5px;color:#000;">Normál</div>
<div style="left:888px;top:496px;width:223px;height:18px;background:linear-gradient(#ececcc,#fdfde1 45%);border:1px solid #b4b4cc;box-sizing:border-box"></div>
<div style="left:1096px;top:497px;width:14px;height:16px;background:linear-gradient(#f2f2f2,#d6d6d6);border-left:1px solid #c8c8d8;box-sizing:border-box"></div>
<svg style="left:1098px;top:502.0px" width="10" height="6"><path d="M1.6 1.2 L5 4.4 L8.4 1.2" fill="none" stroke="#23468c" stroke-width="2.1"/></svg>
<div style="left:891px;top:496.78px;line-height:15.08px;font-size:13.5px;letter-spacing:0.5px;color:#7c7c7c;">megjegyzés</div>
<div style="left:357px;top:176px;width:521px;height:200px;background:rgba(0,0,0,.28);filter:blur(1.5px)"></div>
<div style="left:354px;top:174px;width:520px;height:199px;background:#fff;border:1px solid #9cc0ea;box-sizing:border-box"></div>
<div style="left:355px;top:195px;width:518px;height:20px;background:#c4daf4;border:1px solid #3c6aa8;box-sizing:border-box"></div>
<div style="left:358.5px;top:179.09px;line-height:12.85px;font-size:11.5px;letter-spacing:0.65px;color:#000;">2020.02.26/001</div>
<div style="left:465px;top:179.09px;line-height:12.85px;font-size:11.5px;letter-spacing:0.65px;color:#000;">Kiss Richárd</div>
<div style="left:609px;width:262px;overflow:hidden;white-space:nowrap;top:179.09px;line-height:12.85px;font-size:11.5px;letter-spacing:0.65px">Kaputelefon szerelés a Börzsöny hegyifogadó</div>
<div style="left:358.5px;top:198.99px;line-height:12.85px;font-size:11.5px;letter-spacing:0.65px;color:#000;">2020.01.23/001</div>
<div style="left:465px;top:198.99px;line-height:12.85px;font-size:11.5px;letter-spacing:0.65px;color:#000;">Kiss Richárd</div>
<div style="left:609px;width:262px;overflow:hidden;white-space:nowrap;top:198.99px;line-height:12.85px;font-size:11.5px;letter-spacing:0.65px">Hotel Aragónia SPA villanyszerelés</div>
<div style="left:358.5px;top:218.89px;line-height:12.85px;font-size:11.5px;letter-spacing:0.65px;color:#000;">2020.01.02/001</div>
<div style="left:465px;top:218.89px;line-height:12.85px;font-size:11.5px;letter-spacing:0.65px;color:#000;">Kiss Richárd</div>
<div style="left:609px;width:262px;overflow:hidden;white-space:nowrap;top:218.89px;line-height:12.85px;font-size:11.5px;letter-spacing:0.65px">2020-as folyamatos beszerzések</div>
<div style="left:358.5px;top:238.79px;line-height:12.85px;font-size:11.5px;letter-spacing:0.65px;color:#000;">2019.10.25/002</div>
<div style="left:465px;top:238.79px;line-height:12.85px;font-size:11.5px;letter-spacing:0.65px;color:#000;">Kiss Richárd</div>
<div style="left:609px;width:262px;overflow:hidden;white-space:nowrap;top:238.79px;line-height:12.85px;font-size:11.5px;letter-spacing:0.65px">Hotel Aragónia villamos szerelés, led világítás</div>
<div style="left:358.5px;top:258.69px;line-height:12.85px;font-size:11.5px;letter-spacing:0.65px;color:#000;">2019.10.01/001</div>
<div style="left:465px;top:258.69px;line-height:12.85px;font-size:11.5px;letter-spacing:0.65px;color:#000;">Kiss Richárd</div>
<div style="left:609px;width:262px;overflow:hidden;white-space:nowrap;top:258.69px;line-height:12.85px;font-size:11.5px;letter-spacing:0.65px">Takács Pincészet led és szellőzés projekt</div>
<div style="left:358.5px;top:278.59px;line-height:12.85px;font-size:11.5px;letter-spacing:0.65px;color:#000;">2019.08.16/001</div>
<div style="left:465px;top:278.59px;line-height:12.85px;font-size:11.5px;letter-spacing:0.65px;color:#000;">Kiss Richárd</div>
<div style="left:609px;width:262px;overflow:hidden;white-space:nowrap;top:278.59px;line-height:12.85px;font-size:11.5px;letter-spacing:0.65px">Flór Ferenc Kórház felújítás</div>
<div style="left:358.5px;top:298.49px;line-height:12.85px;font-size:11.5px;letter-spacing:0.65px;color:#000;">2019.07.03/001</div>
<div style="left:465px;top:298.49px;line-height:12.85px;font-size:11.5px;letter-spacing:0.65px;color:#000;">Kiss Richárd</div>
<div style="left:609px;width:262px;overflow:hidden;white-space:nowrap;top:298.49px;line-height:12.85px;font-size:11.5px;letter-spacing:0.65px">2019. évi beszerzések</div>
<div style="left:358.5px;top:318.39px;line-height:12.85px;font-size:11.5px;letter-spacing:0.65px;color:#000;">2019.07.01/001</div>
<div style="left:465px;top:318.39px;line-height:12.85px;font-size:11.5px;letter-spacing:0.65px;color:#000;">Kiss Richárd</div>
<div style="left:609px;width:262px;overflow:hidden;white-space:nowrap;top:318.39px;line-height:12.85px;font-size:11.5px;letter-spacing:0.65px">Déli Point irodaház projekt</div>
<div style="left:358.5px;top:338.29px;line-height:12.85px;font-size:11.5px;letter-spacing:0.65px;color:#000;">2019.05.02/001</div>
<div style="left:465px;top:338.29px;line-height:12.85px;font-size:11.5px;letter-spacing:0.65px;color:#000;">Kiss Virág</div>
<div style="left:609px;width:262px;overflow:hidden;white-space:nowrap;top:338.29px;line-height:12.85px;font-size:11.5px;letter-spacing:0.65px">Eplényi Síaréna</div>
<div style="left:358.5px;top:358.19px;line-height:12.85px;font-size:11.5px;letter-spacing:0.65px;color:#000;">2019.02.28/001</div>
<div style="left:465px;top:358.19px;line-height:12.85px;font-size:11.5px;letter-spacing:0.65px;color:#000;">Kiss Richárd</div>
<div style="left:609px;width:262px;overflow:hidden;white-space:nowrap;top:358.19px;line-height:12.85px;font-size:11.5px;letter-spacing:0.65px">Magosligeti családi ház teljes villany, riasztó s</div>
</body></html>
